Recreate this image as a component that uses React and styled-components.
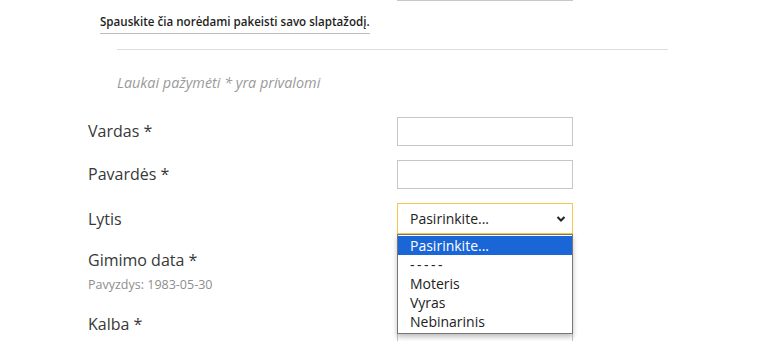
import React from 'react';
import styled, { createGlobalStyle } from 'styled-components';

const GlobalStyle = createGlobalStyle`
  body {
    margin: 0;
    background: #fff;
    font-family: "Open Sans", "Noto Sans", sans-serif;
    color: #333;
    overflow: hidden;
  }
`;

const Page = styled.div`
  width: 758px;
  height: 341px;
  position: relative;
  overflow: hidden;
  padding-left: 88px;
  box-sizing: border-box;
`;

const TopInput = styled.div`
  position: absolute;
  left: 397px;
  top: -20px;
  width: 176px;
  height: 21px;
  border: 1px solid #c8c8c8;
  box-sizing: border-box;
`;

const PasswordLink = styled.a`
  display: inline-block;
  margin: 14px 0 0 12px;
  font-size: 11.6px;
  font-weight: 600;
  color: #1e1e1e;
  text-decoration: none;
  padding-bottom: 3px;
  border-bottom: 1px solid #bdbdbd;
  line-height: 16px;
`;

const Divider = styled.hr`
  margin: 15px 0 0 29px;
  width: 551px;
  border: 0;
  border-top: 1px solid #ddd;
`;

const Note = styled.p`
  margin: 24px 0 0 29px;
  font-size: 14.4px;
  font-style: italic;
  color: #9a9a9a;
  line-height: 18px;
`;

const Form = styled.div`
  margin-top: 25px;
  display: flex;
  flex-direction: column;
`;

const Row = styled.div`
  display: grid;
  grid-template-columns: 309px 176px;
  align-items: start;
  height: ${p => p.$h}px;
`;

const Label = styled.div`
  font-size: 16px;
  line-height: 20px;
  padding-top: ${p => p.$pt ?? 4}px;
  color: #383838;
`;

const Hint = styled.div`
  font-size: 12.5px;
  line-height: 14px;
  color: #8e8e8e;
  margin-top: 8px;
`;

const Input = styled.div`
  width: 176px;
  height: 29px;
  margin-top: ${p => p.$mt || 0}px;
  border: 1px solid #c6c6c6;
  box-sizing: border-box;
  background: #fff;
`;

const SelectWrap = styled.div`
  position: relative;
`;

const Select = styled.div`
  height: 31px;
  border: 1px solid #f2c94c;
  box-sizing: border-box;
  display: flex;
  align-items: center;
  justify-content: space-between;
  padding: 0 6px 0 12px;
  font-size: 14px;
  color: #222;
  background: #fff;
`;

const Listbox = styled.ul`
  position: absolute;
  top: 31px;
  left: 0;
  width: 176px;
  margin: 0;
  padding: 1px 0 2px;
  list-style: none;
  background: #fff;
  border: 1px solid #767676;
  box-sizing: border-box;
  box-shadow: 0 3px 5px rgba(0, 0, 0, 0.25);
  z-index: 2;
`;

const Option = styled.li`
  height: 19px;
  line-height: 19px;
  padding-left: 12px;
  font-size: 14px;
  letter-spacing: ${p => (p.$spaced ? '2.5px' : 'normal')};
  color: ${p => (p.$active ? '#fff' : '#222')};
  background: ${p => (p.$active ? '#1a66d6' : 'transparent')};
`;

const options = ['Pasirinkite...', '-----', 'Moteris', 'Vyras', 'Nebinarinis'];

const Chevron = () => (
  <svg width="10" height="8" viewBox="0 0 10 8">
    <path d="M1.5 2 L5 5.5 L8.5 2" fill="none" stroke="#222" strokeWidth="2" />
  </svg>
);

export default function App() {
  return (
    <Page>
      <GlobalStyle />
      <TopInput />
      <PasswordLink href="#">Spauskite čia norėdami pakeisti savo slaptažodį.</PasswordLink>
      <Divider />
      <Note>Laukai pažymėti * yra privalomi</Note>
      <Form>
        <Row $h={43}>
          <Label>Vardas *</Label>
          <Input />
        </Row>
        <Row $h={43}>
          <Label>Pavardės *</Label>
          <Input />
        </Row>
        <Row $h={41}>
          <Label $pt={6}>Lytis</Label>
          <SelectWrap>
            <Select>
              Pasirinkite...
              <Chevron />
            </Select>
            <Listbox>
              {options.map((o, i) => (
                <Option key={o} $active={i === 0} $spaced={o === '-----'}>{o}</Option>
              ))}
            </Listbox>
          </SelectWrap>
        </Row>
        <Row $h={70}>
          <Label $pt={6}>
            Gimimo data *
            <Hint>Pavyzdys: 1983-05-30</Hint>
          </Label>
          <Input $mt={6} />
        </Row>
        <Row $h={40}>
          <Label $pt={0}>Kalba *</Label>
          <Input $mt={10} />
        </Row>
      </Form>
    </Page>
  );
}
